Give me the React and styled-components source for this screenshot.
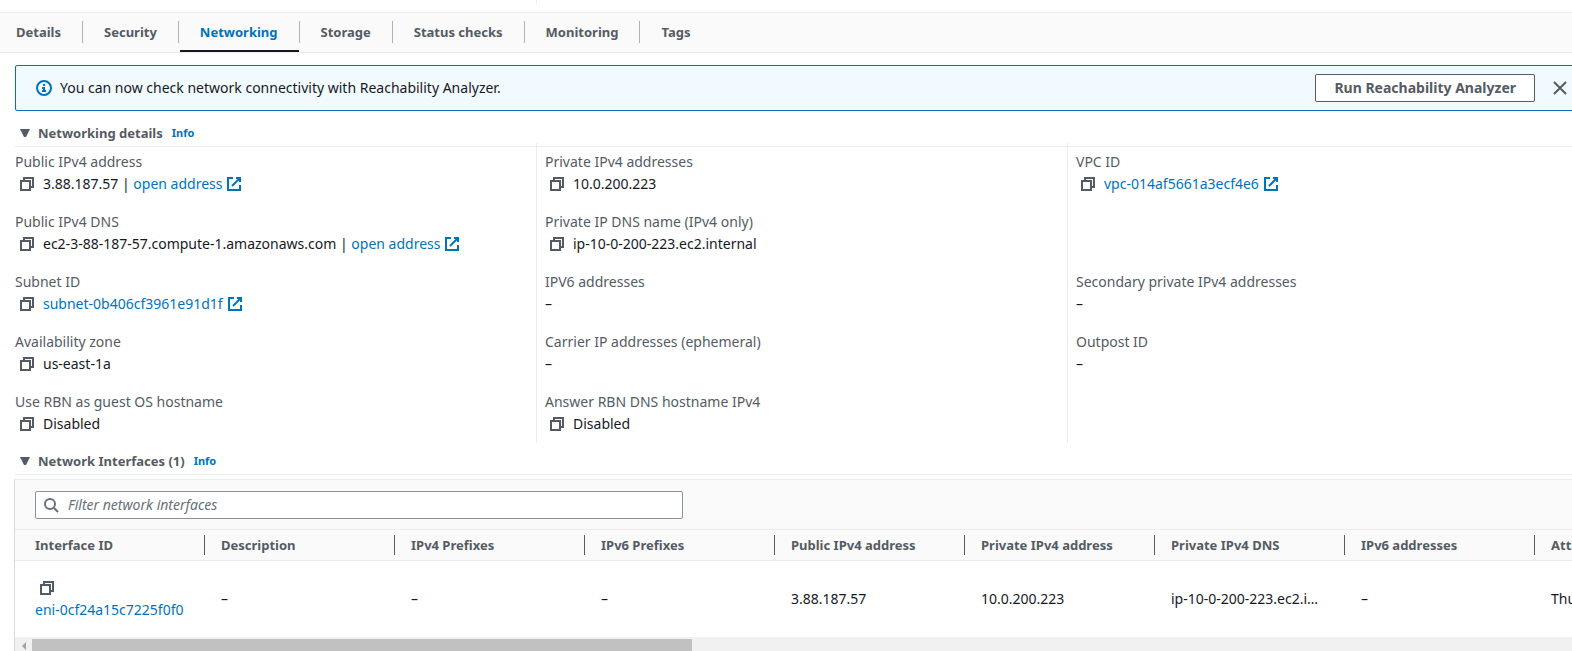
import React, { useState } from "react";
import styled, { createGlobalStyle } from "styled-components";

const color = {
  text: "#16191f",
  label: "#545b64",
  link: "#0073bb",
  line: "#eaeded",
  tabLine: "#aab7b8",
  field: "#879596",
  surface: "#fafafa",
};

const GlobalStyle = createGlobalStyle`
  *, *::before, *::after { box-sizing: border-box; }
  body {
    margin: 0;
    background: #fff;
    color: ${color.text};
    font-family: "Noto Sans", "Open Sans", sans-serif;
    font-size: 14px;
    line-height: 22px;
  }
  button, input { font: inherit; color: inherit; }
`;

const Page = styled.div`
  overflow-x: hidden;
`;

const TopStrip = styled.div`
  display: grid;
  grid-template-columns: repeat(3, minmax(0, 1fr));
  margin: 0 -26px 0 5px;
  height: 12px;
`;

const TopStripRule = styled.div`
  grid-column: 2;
  height: 4px;
  border-left: 1px solid ${color.line};
`;

const TabBar = styled.div`
  display: flex;
  height: 41px;
  background: ${color.surface};
  border-top: 1px solid ${color.line};
  border-bottom: 1px solid ${color.line};
`;

const TabSlot = styled.div`
  display: flex;
  position: relative;
  padding: 0 1px;
  &:first-child { padding-left: 0; }
  &:not(:last-child)::after {
    content: "";
    position: absolute;
    top: 8px;
    right: 0;
    height: 22px;
    border-right: 1px solid ${color.tabLine};
  }
`;

const Tab = styled.button`
  padding: 0 21px 0 20px;
  border: 0;
  border-bottom: 2px solid ${(p) => (p.$active ? color.text : "transparent")};
  background: none;
  color: ${(p) => (p.$active ? color.link : color.label)};
  font-size: 13px;
  font-weight: 700;
  cursor: pointer;
  ${TabSlot}:first-child & { padding-left: 16px; }
`;

const Content = styled.main`
  margin-right: -15px;
  padding: 12px 0 0 15px;
`;

const Alert = styled.div`
  display: flex;
  align-items: center;
  gap: 8px;
  height: 46px;
  padding: 0 18px 0 20px;
  border: 1px solid ${color.link};
  border-radius: 2px;
  background: #f1faff;
`;

const AlertText = styled.span`
  flex: 1;
`;

const ActionButton = styled.button`
  height: 28px;
  padding: 0 18px;
  margin-right: 9px;
  border: 1px solid ${color.label};
  border-radius: 2px;
  background: #fff;
  color: ${color.label};
  font-weight: 700;
  line-height: 20px;
  cursor: pointer;
`;

const IconButton = styled.button`
  display: inline-flex;
  padding: 0;
  border: 0;
  background: none;
  color: ${color.label};
  cursor: pointer;
`;

const Svg = styled.svg`
  display: block;
  flex: none;
  width: 16px;
  height: 16px;
  fill: none;
  stroke: currentColor;
  stroke-width: 2;
`;

const AlertIcon = styled(Svg)`
  color: ${color.link};
`;

const SectionHeader = styled.div`
  display: flex;
  align-items: center;
  gap: 9px;
  height: 36px;
  padding: 11px 0 2px 4px;
  border-bottom: 1px solid ${color.line};
`;

const SectionToggle = styled.button`
  display: flex;
  align-items: center;
  gap: 7px;
  padding: 0;
  border: 0;
  background: none;
  color: ${color.label};
  font-size: 13px;
  font-weight: 700;
  cursor: pointer;
`;

const SectionTitle = styled.h2`
  margin: 0;
  font-size: 13px;
  line-height: 22px;
`;

const Caret = styled.svg`
  width: 12px;
  height: 12px;
  fill: currentColor;
`;

const Link = styled.a`
  display: inline-flex;
  align-items: center;
  gap: 4px;
  color: ${color.link};
  text-decoration: none;
`;

const InfoLink = styled(Link)`
  font-size: 11px;
  font-weight: 700;
`;

const DetailGrid = styled.div`
  display: grid;
  grid-template-columns: repeat(3, minmax(0, 1fr));
  margin: -4px -11px -4px -10px;
`;

const DetailColumn = styled.dl`
  display: grid;
  grid-template-rows: repeat(5, 44px);
  gap: 16px;
  margin: 0;
  padding: 8px 8px 8px 10px;
  & + & {
    padding-left: 8px;
    border-left: 1px solid ${color.line};
  }
`;

const Detail = styled.div`
  grid-row: ${(p) => p.$row};
`;

const Term = styled.dt`
  color: ${color.label};
`;

const Value = styled.dd`
  display: flex;
  align-items: center;
  gap: 8px;
  margin: 0;
  padding-left: ${(p) => (p.$copy ? 4 : 0)}px;
  white-space: nowrap;
`;

const ValueText = styled.span`
  display: inline-flex;
  align-items: center;
  white-space: pre;
`;

const TablePanel = styled.section`
  margin: 4px 0 0 -1px;
  border: 1px solid ${color.line};
  border-left-color: #d5dbdb;
`;

const FilterBar = styled.div`
  padding: 11px 20px 10px;
  background: ${color.surface};
`;

const FilterField = styled.label`
  display: flex;
  align-items: center;
  gap: 9px;
  width: 43%;
  max-width: 648px;
  height: 28px;
  padding: 0 7px;
  border: 1px solid ${color.field};
  border-radius: 2px;
  background: #fff;
  color: #687078;
`;

const FilterInput = styled.input`
  flex: 1;
  min-width: 0;
  padding: 0;
  border: 0;
  outline: 0;
  background: none;
  &::placeholder { color: #687078; font-style: italic; opacity: 1; }
`;

const TableViewport = styled.div`
  overflow: hidden;
`;

const Table = styled.table`
  width: 1710px;
  table-layout: fixed;
  border-collapse: separate;
  border-spacing: 0;
`;

const HeadCell = styled.th`
  height: 32px;
  padding: 0;
  border-top: 1px solid ${color.line};
  border-bottom: 1px solid ${color.line};
  background: ${color.surface};
  color: ${color.label};
  font-size: 13px;
  text-align: left;
  white-space: nowrap;
`;

const HeadLabel = styled.div`
  padding-left: 16px;
  border-right: 1px solid ${color.label};
  line-height: 20px;
  ${HeadCell}:first-child & { padding-left: 20px; }
`;

const Cell = styled.td`
  height: 76px;
  padding: 0 20px 0 16px;
  overflow: hidden;
  text-overflow: ellipsis;
  white-space: nowrap;
  &:first-child { padding: 0 0 0 20px; }
`;

const CopyLine = styled.div`
  display: flex;
  align-items: center;
  height: 22px;
  padding-left: 4px;
`;

const ScrollTrack = styled.div`
  display: flex;
  height: 17px;
  background: #f1f1f1;
`;

const ScrollArrow = styled.div`
  display: flex;
  align-items: center;
  justify-content: center;
  width: 17px;
  color: #a3a3a3;
`;

const ArrowSvg = styled.svg`
  width: 4px;
  height: 8px;
  fill: currentColor;
`;

const ScrollThumb = styled.div`
  width: 42%;
  margin: 2px 0;
  background: #c1c1c1;
`;

const CopyIcon = () => (
  <Svg viewBox="0 0 16 16" aria-hidden="true">
    <path d="M2 5h9v9H2z" />
    <path d="M5 5V2h9v9h-3" />
  </Svg>
);

const ExternalIcon = () => (
  <Svg viewBox="0 0 16 16" aria-hidden="true">
    <path d="M10 2h4v4" />
    <path d="M6 10l8-8" />
    <path d="M14 9v5H2V2h5" />
  </Svg>
);

const CopyButton = ({ label }) => (
  <IconButton type="button" aria-label={`Copy ${label}`}>
    <CopyIcon />
  </IconButton>
);

const Section = ({ title }) => (
  <SectionHeader>
    <SectionTitle>
      <SectionToggle type="button" aria-expanded="true">
        <Caret viewBox="0 0 12 12" aria-hidden="true">
          <path d="M1 2h10L7 10H5z" />
        </Caret>
        {title}
      </SectionToggle>
    </SectionTitle>
    <InfoLink href="#info">Info</InfoLink>
  </SectionHeader>
);

const columns = [
  [
    { row: 1, term: "Public IPv4 address", text: "3.88.187.57 | ", link: "open address" },
    { row: 2, term: "Public IPv4 DNS", text: "ec2-3-88-187-57.compute-1.amazonaws.com | ", link: "open address" },
    { row: 3, term: "Subnet ID", link: "subnet-0b406cf3961e91d1f" },
    { row: 4, term: "Availability zone", text: "us-east-1a" },
    { row: 5, term: "Use RBN as guest OS hostname", text: "Disabled" },
  ],
  [
    { row: 1, term: "Private IPv4 addresses", text: "10.0.200.223" },
    { row: 2, term: "Private IP DNS name (IPv4 only)", text: "ip-10-0-200-223.ec2.internal" },
    { row: 3, term: "IPV6 addresses" },
    { row: 4, term: "Carrier IP addresses (ephemeral)" },
    { row: 5, term: "Answer RBN DNS hostname IPv4", text: "Disabled" },
  ],
  [
    { row: 1, term: "VPC ID", link: "vpc-014af5661a3ecf4e6" },
    { row: 3, term: "Secondary private IPv4 addresses" },
    { row: 4, term: "Outpost ID" },
  ],
];

const DetailItem = ({ row, term, text, link }) => {
  const filled = Boolean(text || link);
  return (
    <Detail $row={row}>
      <Term>{term}</Term>
      <Value $copy={filled}>
        {filled && <CopyButton label={term} />}
        <ValueText>
          {filled ? text : "–"}
          {link && (
            <Link href="#open">
              {link}
              <ExternalIcon />
            </Link>
          )}
        </ValueText>
      </Value>
    </Detail>
  );
};

const tabs = ["Details", "Security", "Networking", "Storage", "Status checks", "Monitoring", "Tags"];

const interfaceColumns = [
  ["Description", "–"],
  ["IPv4 Prefixes", "–"],
  ["IPv6 Prefixes", "–"],
  ["Public IPv4 address", "3.88.187.57"],
  ["Private IPv4 address", "10.0.200.223"],
  ["Private IPv4 DNS", "ip-10-0-200-223.ec2.internal"],
  ["IPv6 addresses", "–"],
  ["Attachment time", "Thu"],
];

export default function App() {
  const [active, setActive] = useState("Networking");
  return (
    <Page>
      <GlobalStyle />
      <TopStrip>
        <TopStripRule />
      </TopStrip>
      <TabBar role="tablist">
        {tabs.map((name) => (
          <TabSlot key={name} role="presentation">
            <Tab
              type="button"
              role="tab"
              aria-selected={name === active}
              $active={name === active}
              onClick={() => setActive(name)}
            >
              {name}
            </Tab>
          </TabSlot>
        ))}
      </TabBar>
      <Content>
        <Alert>
          <AlertIcon viewBox="0 0 16 16" aria-hidden="true">
            <circle cx="8" cy="8" r="7" />
            <path d="M8 11V8H6M10 11H6M8 6V4" />
          </AlertIcon>
          <AlertText>You can now check network connectivity with Reachability Analyzer.</AlertText>
          <ActionButton type="button">Run Reachability Analyzer</ActionButton>
          <IconButton type="button" aria-label="Dismiss">
            <Svg viewBox="0 0 16 16" aria-hidden="true">
              <path d="M2 2l12 12M14 2L2 14" />
            </Svg>
          </IconButton>
        </Alert>
        <Section title="Networking details" />
        <DetailGrid>
          {columns.map((items, i) => (
            <DetailColumn key={i}>
              {items.map((item) => (
                <DetailItem key={item.term} {...item} />
              ))}
            </DetailColumn>
          ))}
        </DetailGrid>
        <Section title="Network Interfaces (1)" />
        <TablePanel>
          <FilterBar>
            <FilterField>
              <Svg viewBox="0 0 16 16" aria-hidden="true">
                <circle cx="7" cy="7" r="5" />
                <path d="M15 15l-4-4" />
              </Svg>
              <FilterInput
                type="text"
                placeholder="Filter network interfaces"
                aria-label="Filter network interfaces"
              />
            </FilterField>
          </FilterBar>
          <TableViewport>
            <Table>
              <thead>
                <tr>
                  <HeadCell scope="col">
                    <HeadLabel>Interface ID</HeadLabel>
                  </HeadCell>
                  {interfaceColumns.map(([name]) => (
                    <HeadCell key={name} scope="col">
                      <HeadLabel>{name}</HeadLabel>
                    </HeadCell>
                  ))}
                </tr>
              </thead>
              <tbody>
                <tr>
                  <Cell>
                    <CopyLine>
                      <CopyButton label="interface ID" />
                    </CopyLine>
                    <Link href="#interface">eni-0cf24a15c7225f0f0</Link>
                  </Cell>
                  {interfaceColumns.map(([name, value]) => (
                    <Cell key={name}>{value}</Cell>
                  ))}
                </tr>
              </tbody>
            </Table>
          </TableViewport>
          <ScrollTrack>
            <ScrollArrow>
              <ArrowSvg viewBox="0 0 4 8" aria-hidden="true">
                <path d="M4 0v8L0 4z" />
              </ArrowSvg>
            </ScrollArrow>
            <ScrollThumb />
          </ScrollTrack>
        </TablePanel>
      </Content>
    </Page>
  );
}
